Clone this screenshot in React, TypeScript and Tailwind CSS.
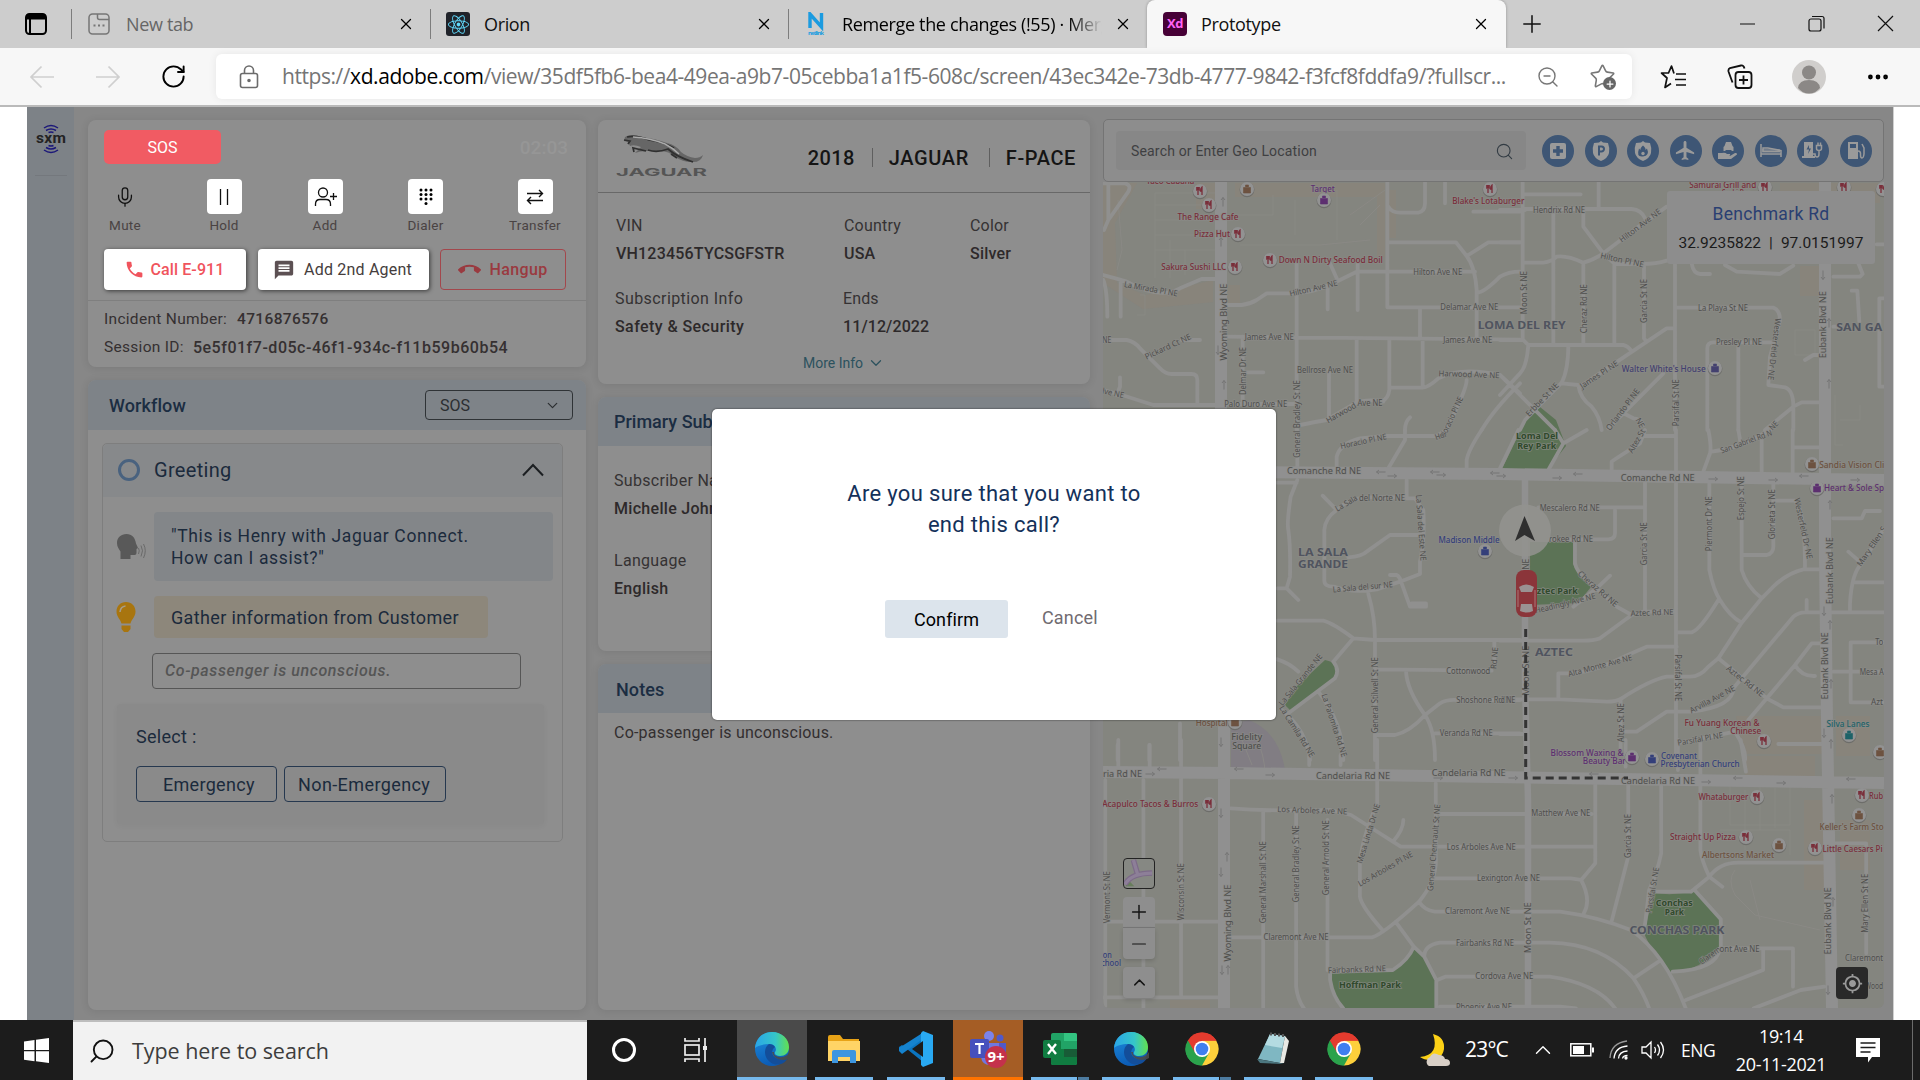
import React from "react";
import { RotateCw, X, Plus, Minus, Search, ChevronDown, ChevronUp, ZoomOut, Star, MoreHorizontal, Mic } from "lucide-react";
import { MdPhone, MdMessage, MdCallEnd, MdFlight, MdMyLocation } from "react-icons/md";
import { FaReact } from "react-icons/fa";

const ui = "font-['Roboto','Noto_Sans',sans-serif]";
const win = "font-['Open_Sans','Noto_Sans',sans-serif]";

/* ---------- browser chrome ---------- */

const CloseX = ({ className = "" }: { className?: string }) => (
  <X size={18} strokeWidth={1.7} className={`shrink-0 text-black ${className}`} />
);

function TabStrip() {
  return (
    <div className={`flex h-12 items-center bg-[#cdcdcd] text-[18px] tracking-[-0.35px] text-[#111] ${win}`}>
      <svg className="ml-[25px] shrink-0" width="22" height="22" viewBox="0 0 22 22">
        <rect x="1" y="1" width="20" height="20" rx="3.5" fill="none" stroke="#000" strokeWidth="2" />
        <path d="M1 4Q1 1 4 1H18Q21 1 21 4V6.500H1zM6 6V21H4V6z" fill="#000" />
      </svg>
      <i className="ml-6 h-[30px] w-px bg-[#7d7d7d]" />
      <div className="flex h-full w-[358px] items-center pl-4">
        <svg width="22" height="22" viewBox="0 0 22 22" fill="none" stroke="#767676" strokeWidth="1.5">
          <rect x="1" y="1" width="20" height="20" rx="3.500" />
          <path d="M9.500 1v3.500a2 2 0 0 0 2 2H21" />
          <path d="M5.500 12.500h2m2.500 0h2m2.500 0h2" strokeWidth="2.200" />
        </svg>
        <span className="ml-4 text-[#666]">New tab</span>
        <CloseX className="mr-[15px] ml-auto" />
      </div>
      <i className="h-[30px] w-px bg-[#7d7d7d]" />
      <div className="flex h-full w-[357px] items-center pl-[15px]">
        <span className="flex h-6 w-6 items-center justify-center rounded-[3px] bg-[#20232a]">
          <FaReact size={21} color="#61dafb" />
        </span>
        <span className="ml-[14px]">Orion</span>
        <CloseX className="mr-[15px] ml-auto" />
      </div>
      <i className="h-[30px] w-px bg-[#7d7d7d]" />
      <div className="flex h-full w-[358px] items-center pl-[18px]">
        <svg width="18" height="24" viewBox="0 0 18 24">
          <path d="M3 16V2L14.500 15V1" fill="none" stroke="#1b9be0" strokeWidth="3.400" />
          <text x="9" y="22.500" textAnchor="middle" fontSize="6" fontWeight="700" letterSpacing="0" fill="#1b9be0" textLength="16">netlink</text>
        </svg>
        <span className="ml-[17px] w-[260px] overflow-hidden bg-gradient-to-r from-black from-85% to-[#cdcdcd] bg-clip-text whitespace-nowrap text-transparent">
          Remerge the changes (!55) · Merge
        </span>
        <CloseX className="mr-[15px] ml-auto" />
      </div>
      <div className="flex h-full w-[359px] items-center rounded-t-lg bg-[#f7f7f7] pl-4 shadow-[0_0_3px_rgba(0,0,0,.3)]">
        <span className="flex h-6 w-6 items-center justify-center rounded bg-[#470137] text-[13px] font-bold text-[#ff61f6]">Xd</span>
        <span className="ml-[14px]">Prototype</span>
        <CloseX className="mr-[16px] ml-auto" />
      </div>
      <Plus size={28} strokeWidth={1.3} className="ml-[12px]" />
      <svg className="mr-[26px] ml-auto" width="154" height="18" viewBox="0 0 154 18" fill="none" stroke="#111" strokeWidth="1.2">
        <path d="M0 9H15M138 1L153 16M153 1L138 16" />
        <rect x="69" y="4" width="12" height="12" rx="2" />
        <path d="M72 1.500h10q2 0 2 2v10" />
      </svg>
    </div>
  );
}

function Toolbar() {
  return (
    <div className="relative z-10 flex h-[59px] items-center border-b-2 border-[#bababa] bg-[#f7f7f7]">
      <svg className="ml-[29px]" width="92" height="24" viewBox="0 0 92 24" fill="none" stroke="#cfcfcf" strokeWidth="1.700">
        <path d="M25 12H2M12.500 1.500L2 12l10.500 10.500M67 12H90M79.500 1.500L90 12 79.500 22.500" />
      </svg>
      <RotateCw size={27} strokeWidth={1.7} className="ml-[39px] text-black" />
      <div className="ml-[29px] flex h-[45px] w-[1416px] items-center rounded-md bg-white pl-[23px] shadow-[0_0_8px_rgba(0,0,0,.07)]">
        <svg width="20" height="24" viewBox="0 0 20 24" fill="none" stroke="#6b6b6b" strokeWidth="1.600">
          <rect x="1.500" y="8.500" width="17" height="14" rx="2" />
          <path d="M5.500 8V5.500a4.500 4.500 0 0 1 9 0V8" />
          <circle cx="10" cy="15.500" r="1" fill="#6b6b6b" />
        </svg>
        <span className={`ml-[23px] w-[1228px] text-[21px] tracking-[-0.44px] whitespace-nowrap text-[#757575] ${win}`}>
          https://<span className="text-black">xd.adobe.com</span>/view/35df5fb6-bea4-49ea-a9b7-05cebba1a1f5-608c/screen/43ec342e-73db-4777-9842-f3fcf8fddfa9/?fullscr...
        </span>
        <ZoomOut size={24} strokeWidth={1.4} className="ml-[26px] shrink-0 text-[#777]" />
        <span className="relative ml-[29px] shrink-0">
          <Star size={27} strokeWidth={1.4} className="text-[#777]" />
          <span className="absolute right-0 bottom-0 flex h-[13px] w-[13px] items-center justify-center rounded-full bg-[#666] text-white">
            <Plus size={10} strokeWidth={3} />
          </span>
        </span>
      </div>
      <svg className="ml-[28px]" width="28" height="26" viewBox="0 0 28 26" fill="none" stroke="#111" strokeWidth="1.700" strokeLinejoin="round">
        <path d="M14 9.500L11.500 2 8.500 9H1.500l5.500 5-2 9.500 6-4M16 10h10M15 15.500h11M16 21h10" />
      </svg>
      <svg className="ml-[39px]" width="26" height="26" viewBox="0 0 26 26" fill="none" stroke="#111" strokeWidth="1.800">
        <rect x="8.500" y="8" width="16" height="16" rx="3" />
        <path d="M16.500 11.500v9M12 16h9M5.500 18.500L1.500 7.500Q1 5 3 4l11-2.500q2.500-.500 3.500 3" />
      </svg>
      <svg className="ml-[39px]" width="34" height="34" viewBox="0 0 34 34">
        <circle cx="17" cy="17" r="17" fill="#d0cecc" />
        <circle cx="17" cy="12.500" r="7" fill="#8b8886" />
        <path d="M6 28q1-8 11-8t11 8q-4.500 5.500-11 5.500T6 28" fill="#8b8886" />
      </svg>
      <MoreHorizontal size={26} strokeWidth={2.4} className="ml-[39px] text-black" />
    </div>
  );
}

/* ---------- first column ---------- */

const tile = "flex h-[35px] w-[35px] items-center justify-center rounded bg-white text-[#111]";

function Action({ w, label, children, bare }: { w: string; label: string; children: React.ReactNode; bare?: boolean }) {
  return (
    <div className={`flex flex-col items-center ${w}`}>
      <div className={bare ? "flex h-[35px] items-center text-[#111]" : tile}>{children}</div>
      <span className="mt-px h-5 text-[13.500px] leading-5 tracking-[0.25px] text-[#4a4343]">{label}</span>
    </div>
  );
}

const card = "rounded-lg bg-[#8e8e8e] shadow-[0_1px_9px_rgba(0,0,0,.1)]";

function CallCard() {
  return (
    <section className={`h-[247px] ${card}`}>
      <div className="flex h-[44px] items-end justify-between pr-[18px] pl-4">
        <div className="flex h-[34px] w-[117px] items-center justify-center rounded-[5px] bg-[#f15b63] pt-px text-[16px] text-white">SOS</div>
        <span className="mb-[2px] text-[19px] font-medium text-[#969696]">02:03</span>
      </div>
      <div className="mt-[15px] flex">
        <Action w="w-[74px]" label="Mute" bare><Mic size={22} strokeWidth={1.4} /></Action>
        <Action w="w-[124px]" label="Hold">
          <svg width="12" height="16" viewBox="0 0 12 16"><path d="M2.500 0v16M9.500 0v16" stroke="#111" strokeWidth="1.300" /></svg>
        </Action>
        <Action w="w-[78px]" label="Add">
          <svg width="23" height="20" viewBox="0 0 23 20" fill="none" stroke="#111" strokeWidth="1.300">
            <circle cx="9" cy="5.500" r="4.500" />
            <path d="M1.500 19v-2q0-4.500 4.500-4.500h6q4.500 0 4.500 4.500v2M16 9.500h7M19.500 6v7" />
          </svg>
        </Action>
        <Action w="w-[123px]" label="Dialer">
          <svg width="14" height="18" viewBox="0 0 14 18">
            {[2, 7, 12].map((x) => [2, 6.500, 11].map((y) => <circle key={`${x}-${y}`} cx={x} cy={y} r="1.500" />))}
            <circle cx="7" cy="15.500" r="1.500" />
          </svg>
        </Action>
        <Action w="w-[96px]" label="Transfer">
          <svg width="18" height="16" viewBox="0 0 18 16" fill="none" stroke="#111" strokeWidth="1.400">
            <path d="M1 4.500h15.500M13 1l3.500 3.500L13 8M17 11.500H1.500M5 8l-3.500 3.500L5 15" />
          </svg>
        </Action>
      </div>
      <div className="mt-[14px] flex h-[41px] pl-4 text-[16px]">
        <button className="flex w-[142px] items-center justify-center gap-[6px] rounded bg-white pr-[2px] font-medium tracking-[0.1px] text-[#f0545d] shadow-[1px_1px_4px_rgba(0,0,0,.6)]">
          <MdPhone size={21} />Call E-911
        </button>
        <button className="ml-3 flex w-[171px] items-center justify-center gap-[9px] rounded bg-white pr-[2px] tracking-[0.2px] text-[#453d3d] shadow-[1px_1px_4px_rgba(0,0,0,.6)]">
          <MdMessage size={22} color="#5c5053" />Add 2nd Agent
        </button>
        <button className="ml-[11px] flex w-[126px] items-center justify-center gap-2 rounded border border-[#a3474c] font-medium tracking-[0.4px] text-[#9a3a40]">
          <MdCallEnd size={23} />Hangup
        </button>
      </div>
      <div className="mt-[10px] border-t border-[#7f7f7f] pt-[5px] pl-4 text-[15.500px] tracking-[0.3px] text-[#353031]">
        <div className="flex h-7 items-center">Incident Number:<b className="ml-[10px] font-medium tracking-[0.35px]">4716876576</b></div>
        <div className="flex h-7 items-center pb-px">Session ID:<b className="ml-[9px] text-[16px] font-medium tracking-[0.52px]">5e5f01f7-d05c-46f1-934c-f11b59b60b54</b></div>
      </div>
    </section>
  );
}

function WorkflowCard() {
  return (
    <section className={`mt-[13px] h-[630px] overflow-hidden ${card}`}>
      <header className="flex h-[50px] items-center justify-between bg-[#7e8388] pr-[13px] pl-[21px]">
        <h2 className="text-[18px] font-medium tracking-[0.1px] text-[#1b2d42]">Workflow</h2>
        <div className="flex h-[30px] w-[148px] items-center justify-between rounded border border-[#2f3336] pt-px pr-[11px] pl-[14px] text-[16px] text-[#2b2e31]">
          SOS<ChevronDown size={17} strokeWidth={1.7} />
        </div>
      </header>
      <div className="mt-[13px] ml-[14px] h-[399px] w-[461px] rounded-[5px] border border-[#7e7e7e] text-[18px] tracking-[0.3px] text-[#1b2a3c]">
        <div className="flex h-[53px] items-center rounded-t-[5px] bg-[#87898b] pr-[17px] pb-[2px] pl-[15px]">
          <i className="h-[22px] w-[22px] rounded-full border-3 border-[#49627f]" />
          <span className="ml-[14px] text-[20px]">Greeting</span>
          <svg className="ml-auto" width="24" height="14" viewBox="0 0 24 14"><path d="M2 12.500L12 2l10 10.500" fill="none" stroke="#1c1f22" strokeWidth="2" /></svg>
        </div>
        <div className="mt-[15px] flex items-center pl-[13px]">
          <svg width="30" height="26" viewBox="0 0 30 26">
            <path d="M10.500 0C5 0 1 3.500 1 9c0 4 2 6 3.500 8.500V25h10v-4h4q2 0 2-2v-4l1.500-1-2-4.500C19 3.500 16 0 10.500 0" fill="#595959" />
            <path d="M22.500 14q1.500 2.500 0 6M25 11.500q3 5 0 11M27.500 10q3.500 6.500 0 14" fill="none" stroke="#6a6a6a" strokeWidth="1" />
          </svg>
          <p className="ml-[8px] flex h-[69px] w-[399px] items-center rounded bg-[#838689] pl-[17px] text-[17.500px] leading-[22px] tracking-[0.62px]">
            "This is Henry with Jaguar Connect.<br />How can I assist?"
          </p>
        </div>
        <div className="mt-[15px] flex items-center pl-[13px]">
          <svg width="20" height="30" viewBox="0 0 20 30" fill="#a8750f">
            <path d="M10 0C4.500 0 .500 4 .500 9.500c0 5.500 4 7.500 5 12h9c1-4.500 5-6.500 5-12C19.500 4 15.500 0 10 0M5.500 23.500h9v3.500L12 30H8l-2.500-3z" />
            <path d="M4 10q.500-5.500 5.500-6" fill="none" stroke="#a79c87" strokeWidth="1.600" />
          </svg>
          <p className="ml-[18px] flex h-[42px] w-[334px] items-center rounded bg-[#8d877b] pl-[17px] tracking-[0.36px]">Gather information from Customer</p>
        </div>
        <div className="mt-[15px] ml-[49px] flex h-[36px] w-[369px] items-center rounded border border-[#565656] pl-3 text-[16px] font-medium tracking-[0.6px] text-[#555] italic">
          Co-passenger is unconscious.
        </div>
        <div className="mt-[15px] ml-[14px] h-[120px] w-[427px] rounded bg-[#8a8a8a] pt-[19px] pl-[19px] shadow-[0_2px_6px_rgba(0,0,0,.04)]">
          <div className="h-7 leading-7">Select :</div>
          <div className="mt-[15px] flex gap-[7px]">
            <span className="flex h-[36px] w-[141px] items-center rounded border border-[#26384f] pl-[26px]">Emergency</span>
            <span className="flex h-[36px] w-[162px] items-center rounded border border-[#26384f] pl-[13px] tracking-[0.4px]">Non-Emergency</span>
          </div>
        </div>
      </div>
    </section>
  );
}

/* ---------- second column ---------- */

function JaguarLogo() {
  return (
    <svg width="94" height="44" viewBox="0 0 94 44">
      <path d="M10 3Q16-1 27 3Q42 5 52 9Q61 11 66 18Q72 23 80 24Q85 24 88 21Q86 29 76 28Q68 28 60 23Q54 17 45 17L32 17Q25 17 20 19L26 13Q19 10 15 12L13 8L9 7z" fill="#666" />
      <path d="M12 3Q22 1 34 6Q48 8 59 14M33 16Q42 19 53 15Q62 23 78 28M9 6L15 7L13 10M31 17L18 14L19 18M56 20L62 24" fill="none" stroke="#303030" strokeWidth="1.700" />
      <path d="M18 3Q35 4 50 10Q58 14 64 20" fill="none" stroke="#aaa" strokeWidth="1.400" />
      <text x="1" y="41.500" textLength="91" lengthAdjust="spacingAndGlyphs" fontSize="10.500" fontWeight="700" fontFamily="Inter, sans-serif" fill="#555">JAGUAR</text>
    </svg>
  );
}

function Field({ label, value, w, cls = "" }: { label: string; value: string; w?: string; cls?: string }) {
  return (
    <div className={`flex flex-col text-[16px] leading-7 text-[#353233] ${w ?? ""} ${cls || "tracking-[0.2px]"}`}>
      <span>{label}</span>
      <span className="font-medium text-[#2d292a]">{value}</span>
    </div>
  );
}

function VehicleCard() {
  return (
    <section className={`h-[264px] ${card}`}>
      <div className="flex h-[73px] items-center border-b border-[#686868] pr-[14px] pl-[17px] text-[20px] font-medium text-[#151515]">
        <JaguarLogo />
        <div className="ml-auto flex items-center pt-[3px] whitespace-nowrap">
          <span className="tracking-[0.4px]">2018</span><i className="mr-4 ml-[17px] h-[19px] w-px bg-[#5f5f5f]" />
          <span className="tracking-[0.6px]">JAGUAR</span><i className="mr-4 ml-[20px] h-[19px] w-px bg-[#5f5f5f]" />
          <span className="tracking-[0.6px]">F-PACE</span>
        </div>
      </div>
      <div className="mt-[19px] flex pl-[18px]">
        <Field label="VIN" value="VH123456TYCSGFSTR" w="w-[228px]" />
        <Field label="Country" value="USA" w="w-[126px]" />
        <Field label="Color" value="Silver" />
      </div>
      <div className="mt-[17px] flex pl-[17px]">
        <Field label="Subscription Info" value="Safety & Security" w="w-[228px]" cls="tracking-[0.42px]" />
        <Field label="Ends" value="11/12/2022" cls="tracking-[0.1px]" />
      </div>
      <div className="mt-[10px] flex items-center justify-center text-[14px] leading-6 text-[#2c525e]">
        More Info<ChevronDown size={18} strokeWidth={1.7} className="ml-[4px]" />
      </div>
    </section>
  );
}

function SideCards() {
  return (
    <>
      <section className={`mt-[13px] h-[254px] overflow-hidden ${card}`}>
        <header className="flex h-[49px] items-center bg-[#7e8388] pl-4 text-[18px] font-medium text-[#1b2d42]">Primary Subscriber</header>
        <div className="mt-[21px] pl-4">
          <Field label="Subscriber Name" value="Michelle Johnson" cls="tracking-[0.3px]" />
          <Field label="Language" value="English" cls="mt-[24px] tracking-[0.3px]" />
        </div>
      </section>
      <section className={`mt-[13px] h-[346px] overflow-hidden ${card}`}>
        <header className="flex h-[49px] items-center bg-[#7e8388] pt-px pl-[18px] text-[18px] font-medium tracking-[0.1px] text-[#1b2d42]">Notes</header>
        <p className="mt-[8px] pl-4 text-[16px] leading-6 tracking-[0.22px] text-[#332f30]">Co-passenger is unconscious.</p>
      </section>
    </>
  );
}

/* ---------- map ---------- */

type Lbl = [string, number, number, number, number?, string?];

const RED = "#7a2e3a", PUR = "#5d2f70", BLU = "#343f7a", BRN = "#6d5240", TEAL = "#1d6268", GRY = "#4f4f4d", DIS = "#50545f", GRN = "#304a2c";

const labelsNW: Lbl[] = [
  ["Taco Cabana", 211, 243, 48, 0, RED], ["The Range Cafe", 324, 352, 61, 0, RED], ["Pizza Hut", 336, 401, 36, 0, RED],
  ["Sakura Sushi LLC", 281, 502, 65, 0, RED], ["Target", 668, 268, 24, 0, PUR], ["Down N Dirty Seafood Boil", 692, 481, 104, 0, RED],
  ["Blake's Lotaburger", 1165, 303, 72, 0, RED], ["La Mirada Pl NE", 153, 565, 54, 10], ["Hilton Ave NE", 640, 563, 49, -13],
  ["Hilton Ave NE", 1013, 514, 49], ["Delamar Ave NE", 1108, 620, 58], ["James Ave NE", 508, 710, 49], ["James Ave NE", 1103, 717, 49],
  ["Pickard Ct NE", 203, 738, 50, -25], ["Bellrose Ave NE", 675, 808, 56], ["Harwood Ave NE", 1107, 821, 61, 2], ["NE", 20, 719, 9],
  ["lve NE", 40, 877, 22, 12], ["Palo Duro Ave NE", 467, 911, 63], ["Harwood", 722, 937, 33, -30], ["Ave NE", 810, 906, 25],
  ["Delmar Dr NE", 426, 813, 48, -90], ["Bradley St NE", 590, 913, 48, -90], ["Wyoming Blvd NE", 369, 666, 77, -90, "W"], ["Horacio Pl NE", 1053, 950, 44, -65],
];
const labelsNE: Lbl[] = [
  ["Samurai Grill and", 668, 256, 67, 0, RED], ["Sushi Bar", 708, 278, 28, 0, RED], ["Hendrix Rd NE", 177, 328, 52], ["Hilton Ave NE", 419, 375, 50, -37], ["Hilton Pl NE", 367, 478, 44, 12],
  ["Moon St NE", 69, 578, 43, -90], ["Cheraz Rd NE", 250, 626, 49, -90], ["Garcia St NE", 431, 603, 44, -90], ["La Playa St NE", 669, 621, 50],
  ["Presley Pl NE", 717, 725, 46], ["Westerfeld Dr NE", 825, 748, 62, 97], ["Walter White's House", 491, 807, 84, 0, "#43406f"],
  ["James Pl NE", 296, 822, 44, -33], ["Erbbe St NE", 125, 897, 43, -46], ["Orlando Pl NE", 367, 927, 50, -53], ["Parsifal St NE", 525, 908, 47, -90],
  ["Eubank Blvd NE", 968, 674, 67, -90, "W"], ["LOMA DEL REY", 65, 676, 88, 0, DIS], ["SAN GA", 1078, 681, 46, 0, DIS], ["NE", 422, 968, 10, 60], ["NE", 820, 975, 9, -45],
];
const labelsMW: Lbl[] = [
  ["General", 590, 43, 27, -90], ["Horacio Pl NE", 790, 32, 47, -12], ["Hor", 1022, 15, 12, -20], ["Comanche Rd NE", 672, 121, 74, 0, "W"],
  ["La Sala", 738, 218, 24, -30], ["del Norte NE", 846, 201, 46], ["La Sala del Este NE", 965, 293, 66, 86], ["LA SALA", 669, 366, 50, 0, DIS], ["GRANDE", 669, 401, 50, 0, DIS],
  ["Madison Middle", 1107, 329, 61, 0, BLU], ["La Sala del sur NE", 788, 469, 60, -5], ["La Sala Grande NE", 600, 748, 64, -51], ["La Camila Rd NE", 593, 903, 59, 58],
  ["La Palomita Rd NE", 705, 885, 66, 72], ["General Stilwell St NE", 823, 796, 76, -90], ["Cottonwood", 1105, 722, 44], ["Rd NE", 1181, 684, 22, -85],
  ["Shoshone Rd NE", 1157, 808, 59], ["Veranda Rd NE", 1099, 908, 53], ["Hospital", 335, 878, 32, 0, BRN], ["Fidelity", 440, 920, 31, 0, "S"], ["Square", 440, 948, 29, 0, "S"],
];
const labelsME: Lbl[] = [
  ["Loma Del", 111, 19, 42, 0, GRN], ["Rey Park", 110, 48, 39, 0, GRN], ["Altez St", 408, 32, 26, -60], ["San Gabriel Rd N", 738, 33, 54, -20],
  ["Comanche Rd NE", 473, 143, 74, 0, "W"], ["Sandia Vision Cli", 1055, 104, 65, 0, BRN], ["Heart & Sole Sp", 1062, 174, 60, 0, PUR], ["Mescalero Rd NE", 209, 232, 60],
  ["rokee Rd NE", 213, 326, 44], ["Garcia St NE", 431, 341, 43, -90], ["Piermont Dr NE", 625, 281, 55, -90], ["Espejo St NE", 720, 205, 44, -90], ["Glorieta St NE", 815, 253, 50, -90],
  ["Westerfeld Dr NE", 912, 295, 62, 78], ["Eubank Blvd NE", 988, 422, 67, -90, "W"], ["Eubank Blvd NE", 973, 708, 67, -90, "W"], ["Mary Ellen S", 1113, 348, 46, -56],
  ["NE", 75, 403, 11, -90], ["ztec Park", 172, 483, 41, 0, GRN], ["Headingly Ave NE", 195, 518, 62, -14], ["Cheraz Rd NE", 295, 475, 50, 41], ["Aztec Rd NE", 456, 546, 43, -2],
  ["AZTEC", 162, 666, 38, 0, DIS], ["Moon St NE", 75, 722, 50, -90, "W"], ["Alta Monte Ave NE", 300, 705, 66, -15], ["Parsifal St NE", 534, 743, 47, 90], ["Aztec Rd NE", 737, 752, 45, 38],
  ["Arvilla Ave NE", 636, 806, 50, -28], ["Altez St NE", 360, 878, 39, -90], ["Fu Yuang Korean &", 666, 879, 75, 0, RED], ["Chinese", 737, 903, 31, 0, RED], ["Parsifal Pl NE", 600, 925, 46, -10],
  ["Silva Lanes", 1044, 881, 43, 0, TEAL], ["Blossom Waxing &", 261, 969, 73, 0, PUR], ["Beauty Bar", 313, 994, 43, 0, PUR], ["Covenant", 537, 978, 36, 0, BLU], ["Presbyterian Church", 600, 1002, 79, 0, BLU],
  ["rd NE", 20, 809, 17], ["To", 1138, 634, 8], ["Mesa A", 1115, 724, 24], ["Azt", 1131, 814, 12],
];
const labelsS: Lbl[] = [
  ["ria Rd NE", 43, 99, 39, 0, "W"], ["Candelaria Rd NE", 484, 105, 74, 0, "W"], ["Candelaria Rd NE", 705, 96, 74, 0, "W"], ["Candelaria Rd NE", 1067, 121, 74, 0, "W"],
  ["Acapulco Tacos & Burros", 96, 193, 96, 0, RED], ["Los Arboles Ave NE", 406, 209, 70, 2], ["Matthew Ave NE", 881, 216, 59], ["Los Arboles Ave NE", 729, 318, 69],
  ["Los Arboles Pl NE", 545, 385, 62, -30], ["Lexington Ave NE", 781, 412, 63], ["Claremont Ave NE", 722, 512, 65], ["Claremont Ave NE", 375, 588, 65], ["Fairbanks Rd NE", 736, 607, 58],
  ["Fairbanks Rd NE", 491, 686, 58, -2], ["Cordova Ave NE", 773, 705, 58], ["Phoenix Ave NE", 734, 800, 56], ["Hoffman Park", 516, 736, 62, 0, GRN], ["Conchas", 1098, 489, 37, 0, GRN], ["Park", 1098, 517, 19, 0, GRN],
  ["CONCHAS PARK", 1103, 571, 95, 0, DIS], ["Whataburger", 1192, 172, 50, 0, RED], ["Rub", 1484, 167, 14, 0, RED], ["Keller's Farm Sto", 1437, 260, 64, 0, BRN], ["Straight Up Pizza", 1153, 291, 66, 0, RED],
  ["Albertsons Market", 1220, 346, 72, 0, BRN], ["Little Caesars Pi", 1439, 326, 60, 0, RED], ["Wisconsin St NE", 154, 455, 57, -90], ["Vermont St NE", 12, 472, 52, -90],
  ["Wyoming Blvd NE", 243, 549, 77, -90, "W"], ["General Marshall St NE", 310, 427, 82, -90], ["General Bradley St NE", 373, 371, 77, -90], ["General Arnold St NE", 432, 353, 75, -90],
  ["Mesa Linda Dr NE", 512, 280, 62, -73], ["General Chennault St NE", 637, 323, 87, -85], ["Moon St NE", 817, 563, 51, -90, "W"], ["Garcia St NE", 1008, 288, 44, -90], ["Parsifal St NE", 1055, 450, 46, -80],
  ["Eubank Blvd NE", 1390, 543, 67, -90, "W"], ["Mary Ellen St NE", 1461, 490, 59, -90], ["Clarem", 1165, 645, 24, -35], ["ont Ave NE", 1223, 625, 40], ["Claremont", 1461, 651, 38], ["Wood", 1480, 736, 18], ["on", 14, 644, 9, 0, BLU], ["chool", 21, 668, 20, 0, BLU],
];

function Labels({ list, ox, oy, sx }: { list: Lbl[]; ox: number; oy: number; sx: number }) {
  return (
    <g>
      {list.map(([t, x, y, len, rot = 0, kind = GRY], i) => {
        const district = kind === DIS, wide = kind === "W", park = kind === GRN;
        const fill = kind === "W" || kind === "S" ? GRY : kind;
        const poi = !wide && kind !== GRY;
        return (
          <text
            key={i}
            transform={`translate(${(ox + x * sx).toFixed(1)} ${(oy + y / 3).toFixed(1)}) rotate(${rot})`}
            textAnchor="middle" dominantBaseline="central" textLength={len} lengthAdjust="spacingAndGlyphs"
            fontSize={district ? 10.5 : wide ? 9.5 : poi ? 8.7 : 8.2}
            fontWeight={district || park ? 700 : poi ? 500 : 400}
            fill={fill} stroke="#8b8b88" strokeWidth="1.6" strokeOpacity=".75" paintOrder="stroke"
          >
            {t}
          </text>
        );
      })}
    </g>
  );
}

const roadsNW = "M10 250H75q20 5 10 25L25 360 12 390M25 250V360M10 525Q50 535 80 545 180 600 240 565L305 537H345M10 540Q22 570 22 650M62 545V650M10 720H80Q105 725 120 745L180 805Q195 822 215 822H275Q292 822 292 840V910M60 832V860L50 885M10 870L75 888 160 915H345M245 720H300M380 615H425Q450 612 470 600L500 580H570Q640 580 700 550L770 515H1125M590 490V990M690 490L710 535M683 560V628M773 490V630M862 245V622H1260M865 320Q875 338 900 338H955Q975 335 975 310V245M1035 245V310M1120 335H1260M380 710L1260 719M428 710V910M440 817H490M868 427H1068L1100 468Q1125 500 1130 570V715M1100 468L1165 427H1260M1130 578Q1150 580 1200 530 1225 515 1260 515M960 622V715M770 720V905M687 810V960M868 720V870Q865 895 845 905M968 720V862M872 863H968Q985 862 1015 835 1080 800 1200 825L1260 880M600 975Q650 965 680 960L765 910Q800 895 850 905M1260 850Q1180 930 1145 990M1100 840Q1100 870 1040 985M915 990Q915 965 930 952M380 912H590";
const roadsNE = "M68 245V720M75 283H242M0 330H75M75 327H395Q425 330 435 355M296 245V325M160 330V730M250 330V380Q280 420 310 460L395 395 500 320M75 488H130Q155 485 170 470 200 465 250 488 280 480 310 460L345 492H425Q470 492 500 482M250 490V730M343 495V730M432 492V715L440 725M525 490V990M0 720H70L85 735H370Q385 738 395 755M240 860L500 685H525M85 735Q80 800 60 820L0 885M0 825L165 990M205 735Q205 810 185 848L75 960 60 990M185 850L235 855Q240 895 275 920 300 950 305 990M530 623H820Q840 630 840 660 830 700 810 770L805 855 855 862Q880 870 880 920V990M622 990V745Q622 727 640 727H820M715 740V990M795 990L880 920 905 907H960M325 985L490 820M370 940L400 955Q420 955 430 975M575 490Q580 520 600 522H630M675 495L710 515 840 522 880 497M1000 530H1080L1088 522 1075 490M1130 433H1150M1055 572H1072L1078 665M1000 680H1020M1150 595H1138V860H1150M915 780L940 765H960M0 427H65";
const roadsMW = "M592 0V110M592 150L572 200Q560 280 565 300 572 350 570 440L560 475H532M560 475L595 510M532 158H590M668 197L710 240Q675 265 673 300V450Q672 470 700 470 760 490 830 478L900 455 960 432V395Q975 330 970 240L945 205H920V150M710 240Q745 205 800 202H920M745 382Q785 380 800 365L870 315H965M870 435H890Q900 440 905 460L930 530H978V520H935M805 492Q825 560 825 630V990M532 572H670Q700 580 760 625L825 630H1260M760 625L700 695Q720 720 705 745L565 850M532 688Q570 700 595 725M655 785Q730 880 730 990M545 840Q620 900 630 990M830 718L1175 722M918 722Q920 780 975 855 1005 900 1005 990M830 915H885Q930 905 975 855L1020 820Q1040 808 1070 810H1260M1005 910H1260M1183 635V700M710 110V80Q720 40 780 25L860 18H1010L1040 0M915 0V30L865 115M1145 0Q1105 60 1100 90V115M1255 0L1200 115M240 880V990M53 945V990M148 945V990";
const roadsME = "M115 232H430M345 240V310Q345 328 325 328H150M435 155V545M528 0V990M435 18H525M435 0L420 40Q340 90 335 95V120M190 40L145 120M165 0L190 40 260 0M625 0Q635 50 630 70L610 125M635 65Q720 55 810 0M715 0L722 40M785 20V130M878 0V130M880 52H965M628 155V420Q640 480 660 510 690 560 725 578M725 155V420Q740 470 785 505M725 375H800Q820 370 820 350V155M825 212H885Q915 240 915 415M965 418H910Q860 430 820 470L785 505 725 578 655 685 625 710Q600 740 570 740H500Q450 750 365 805 350 815 320 815L180 808H0M225 335V400Q230 425 260 450L350 530 395 555 300 625Q280 632 250 632H0M220 530L290 475 330 437M395 555L430 545H520M530 607H575Q600 600 655 510M530 650H440Q370 680 330 700 260 730 205 730H175V805M362 810V960M375 905H410L500 845H575Q700 830 700 775L880 560Q895 547 915 547H1150M920 547V510M655 685L800 805 850 832H965M965 640H935L885 705 745 870M885 705Q905 740 945 738M1000 265H1085L1095 243H1140M1000 725H1150M1150 637H1052V817H1150M1050 547V520Q1055 430 1085 400L1150 300M1045 365L1085 400M1065 457H1150M835 942H965M530 940L705 905Q740 960 735 990M0 912H75";
const roadsS = "M10 120V805M35 0V80M95 15V80M155 0V770M83 120V805M5 545H230M5 772H230M250 205Q340 215 440 210L480 225 560 305 575 320H945M560 305Q580 270 580 240M400 50V75M460 45V75M530 0V190Q500 300 497 370V470Q500 500 540 570M312 215V805M375 215V740Q378 780 390 805M435 240V690M250 592H520Q540 585 610 485 645 420 642 350V130M610 485Q620 510 640 515H880Q950 530 1015 570 1080 640 1120 805M565 545L600 620M650 222H940M947 135V370L920 420Q940 480 925 520M640 415H900L920 420M1010 135V350L978 545M1073 135V340Q1065 400 1050 450M1148 0V330Q1150 360 1165 410L1190 440M1130 455L1165 410Q1185 368 1220 368H1390M1130 455H1060M1050 450L1040 580M600 620L620 650Q620 615 650 608H860Q960 610 1020 715 1040 760 1050 805M620 650L643 720V805M1020 715L1068 665M645 720L660 710H860Q950 730 985 805M1138 452L1187 538V620M1095 695Q1180 690 1185 625H1325V740M1385 740L1340 750 1250 805M1268 630V690L1120 780M1465 310V640M1400 310H1465M1005 0V80M1105 0V90M1225 0L1235 95M650 800H880L910 805M440 695V720Q445 770 465 805M440 695L560 690Q590 660 600 620";

const forks: [number, number][] = [
  [1200, 191], [1209, 205], [1238, 234], [1235, 267], [1270, 260], [1490, 189], [1765, 187], [1844, 187], [1883, 189],
  [1764, 741], [1209, 804], [1757, 797], [1862, 795], [1746, 837], [1815, 848],
];
const pois: [number, number, string][] = [
  [1247, 189, BRN], [1324, 200, PUR], [1715, 368, "#43406f"], [1485, 551, BLU], [1812, 464, BRN], [1817, 488, PUR],
  [1849, 735, TEAL], [1880, 752, BRN], [1632, 757, PUR], [1652, 759, BLU], [1859, 815, BRN], [1779, 845, BRN], [1235, 722, BRN],
];
const arrows: [number, number, number][] = [
  [1223, 202, 0], [1221, 242, 0], [1224, 385, 0], [1218, 350, 180], [1823, 275, 180], [1829, 323, 0], [1829, 384, 0], [1381, 472, -90], [1392, 476, 90], [1435, 472, -90], [1441, 475, 90], [1495, 473, -90], [1501, 476, 90],
  [1557, 478, 90], [1578, 474, -90], [1713, 479, 90], [1773, 480, 90], [1804, 476, -90], [1855, 480, 90], [1830, 505, 0], [1824, 611, 180], [1830, 625, 0], [1831, 684, 0], [1824, 733, 180], [1831, 744, 0],
  [1221, 742, 180], [1150, 774, 90], [1162, 769, -90], [1239, 769, -90], [1270, 775, 90], [1438, 778, 90], [1513, 778, 90], [1594, 774, -90], [1706, 782, 90], [1738, 778, -90], [1781, 783, 90], [1851, 779, -90],
  [1221, 813, 180], [1227, 857, 0], [1221, 872, 180], [1222, 970, 180], [1228, 970, 0], [1832, 799, 0], [1828, 990, 180], [1833, 902, 0],
];

function MapCanvas() {
  const third = "scale(.33333)";
  return (
    <svg className="block" width="781" height="826" viewBox="1103 182 781 826" fontFamily="'Noto Sans', sans-serif">
      <rect x="1103" y="182" width="781" height="826" fill="#84857f" />
      <g fill="#8a8379" opacity=".7">
        <path d="M1103 183h34l-22 40 2 60 28 12 48-10 20-5v22l-70 7-40-26zM1196 183h20v26h-20zM1235 183h150v74h-8v-60h-142zM1226 285h14v18h-14zM1386 190h10v48h-10zM1780 183h100v20h-100zM1800 266h24v30h-24zM1736 716h88v38h-80zM1836 716h34v40h-34zM1745 756h70v22h-70zM1804 800h30v90h-30zM1840 820h30v50h-30zM1170 1000h40v8h-40z" />
      </g>
      <path d="M1231 778v-54l18-4q30 12 36 50z" fill="#817d83" />
      <g fill="none" stroke="#8b8a86" strokeWidth=".8">
        <path d="M1155 193h60M1155 205h60M1155 220h55M1155 235h60M1155 250h60M1155 193v85M1170 240v38M1185 250v25M1235 215h38v-20M1240 245h80l50-5M1295 200v35M1337 190v50M1350 215l35-25M1360 225l20-20M1118 200l4 50-5 20M1140 295h5v20h-8M1795 330v25h20v-25zM1840 420h20v-15M1730 785v40h60v-45M1745 790v60M1760 785v45M1775 788v40M1720 830h70v25M1735 870q-8 10 0 25l20 20 65 15M1750 880l10 40M1843 445h-8v-50M1255 735q10 20 10 40M1242 740l10 25" />
      </g>
      <g fill="#5c7356">
        <path d="M1540 407l16 13 10 26-18 23h-46l15-31 8-20z" />
        <path d="M1325 660q12 2 11 13-2 5-9 10l-36 28-6-6 11-18z" />
        <path d="M1530 542h43v22q4 10 18 23l-13 16-48 2z" />
        <path d="M1414 947q-5 13-21 23l-63 2v8q3 17 13 28h94v-28l-13-23z" />
        <path d="M1654 893q21 3 41-2l14 17 12 11-2 28q-17 24-49 25-21-25-26-39z" />
      </g>
      <g fill="none" stroke="#90908f" strokeWidth="3.800" strokeLinecap="round" strokeLinejoin="round">
        <g transform="translate(1100 100)"><path transform={third} strokeWidth="11.500" d={roadsNW} /></g>
        <g transform="translate(1500 100)"><path transform={third} strokeWidth="11.500" d={roadsNE} /></g>
        <g transform="translate(1100 430)"><path transform={third} strokeWidth="11.500" d={roadsMW} /></g>
        <g transform="translate(1500 430)"><path transform={third} strokeWidth="11.500" d={roadsME} /></g>
        <path transform="translate(1100 740) scale(.523 .33333)" vectorEffect="non-scaling-stroke" d={roadsS} />
      </g>
      <g fill="none" stroke="#909090" strokeWidth="12">
        <path d="M1221 182V560L1224 720V1008M1825 182V560L1827 720 1832 1008M1103 772L1230 773 1884 783M1103 471L1500 474 1884 480" />
        <path d="M1525 475V680L1528 800V1008" strokeWidth="6.500" />
      </g>
      <g fill="none" stroke="#737373" strokeWidth=".9">
        {arrows.map(([x, y, r], i) => <path key={i} transform={`translate(${x} ${y}) rotate(${r})`} d="M0 4.500V-4.500M-2-2L0-4.500 2-2" />)}
      </g>
      <Labels list={labelsNW} ox={1100} oy={100} sx={1 / 3} />
      <Labels list={labelsNE} ox={1500} oy={100} sx={1 / 3} />
      <Labels list={labelsMW} ox={1100} oy={430} sx={1 / 3} />
      <Labels list={labelsME} ox={1500} oy={430} sx={1 / 3} />
      <Labels list={labelsS} ox={1100} oy={740} sx={0.523} />
      {forks.map(([x, y], i) => (
        <g key={i} transform={`translate(${x} ${y})`}>
          <circle cy=".8" r="7.400" fill="#6d6d6a" /><circle r="7" fill="#929292" />
          <path d="M-2 0V4M-3.200-4V-1h2.400V-4M-2-4v3M2 4V-4q-1.500 1-1.500 4H2" fill="none" stroke={RED} strokeWidth="1.300" />
        </g>
      ))}
      {pois.map(([x, y, c], i) => (
        <g key={i} transform={`translate(${x} ${y})`}>
          <circle cy=".8" r="7.400" fill="#6d6d6a" /><circle r="7" fill="#929292" />
          <path d="M-3.500-1.500h7V4h-7zM-1.500-2V-4h3v2" fill={c} stroke={c} strokeWidth=".6" />
        </g>
      ))}
      <path d="M1525.700 629V778H1628" fill="none" stroke="#343434" strokeWidth="3" strokeDasharray="8 5" />
      <circle cx="1525" cy="530.500" r="26" fill="#93938f" opacity=".85" />
      <path d="M1524.500 516l10.500 25-10.500-6-9.500 6z" fill="#2f2f2f" />
      <g>
        <rect x="1516" y="570" width="21" height="47" rx="8" fill="#8b353a" />
        <path d="M1519 587q7.500-5 15 0l-2 5h-11zM1521 604h11l1 7q-6.500 3-13 0z" fill="#9a9292" />
        <path d="M1518 590v17M1535 590v17" stroke="#a77" strokeWidth="1" />
      </g>
    </svg>
  );
}

const white = "#9a9a9a";
const poiIcons: React.ReactNode[] = [
  <svg key="a" width="18" height="18" viewBox="0 0 18 18"><rect x="1" y="1" width="16" height="16" rx="2" fill={white} /><path d="M9 4v10M4 9h10" stroke="#3e5675" strokeWidth="3.400" /></svg>,
  <svg key="b" width="18" height="20" viewBox="0 0 18 20"><path d="M9 0l2 1.500L16 2q2 5 1 10t-8 8q-7-3-8-8T2 2l5-.5z" fill={white} /><path d="M7 14.500V5.500h2.500a2.500 2.500 0 0 1 0 5H7" fill="none" stroke="#3e5675" strokeWidth="2" /></svg>,
  <svg key="c" width="18" height="20" viewBox="0 0 18 20"><path d="M9 0l2 1.500L16 2q2 5 1 10t-8 8q-7-3-8-8T2 2l5-.5z" fill={white} /><path d="M9 4.500q3 2.500 2.500 4.500L13 7.500q3 7-4 8t-4-8L6.500 9Q6 7 9 4.500" fill="#3e5675" /><circle cx="9" cy="12.500" r="1.700" fill={white} /></svg>,
  <MdFlight key="d" size={23} color={white} />,
  <svg key="e" width="20" height="18" viewBox="0 0 20 18" fill={white}><path d="M6.500 4L8 0h5l1.500 4 1 1v4h-2V8h-6v1h-2V5zM0 11h4q3-1 5 1h3q1 1.500-1 2H8h4l5-3q2.500-.5 2 1.500L13 17H0z" /></svg>,
  <svg key="f" width="22" height="13" viewBox="0 0 22 13" fill="none" stroke={white} strokeWidth="1.500"><path d="M1 0v13M1 10h20M21 13V6.500L8 4H3v3.500h17" /><path d="M2 5h18v3.500H2z" fill={white} stroke="none" opacity=".55" /></svg>,
  <svg key="g" width="22" height="19" viewBox="0 0 22 19"><path d="M2 1h9v14h2v2H0v-2h2z" fill={white} /><path d="M7 4L4.500 8.500H7L6 13l3-5.500H7z" fill="#3e5675" /><path d="M11 13h2q0 3 2 3t2-3V9M14.500 4.500v3q0 2 2.500 2t2.500-2v-3zM16 1.500v3M18.500 1.500v3" fill="none" stroke={white} strokeWidth="1.500" /></svg>,
  <svg key="h" width="18" height="19" viewBox="0 0 18 19"><path d="M1 1h10v17H1z" fill={white} /><path d="M3 3h6v4H3z" fill="#3e5675" /><path d="M11 10q3 0 2.500 4 0 3 1.500 3t2-4V7l-2-4" fill="none" stroke={white} strokeWidth="1.500" /></svg>,
];

function MapPanel() {
  return (
    <section className="-mt-px ml-[13px] w-[781px]">
      <div className="flex h-[63px] items-center rounded-[5px] border border-[#747474] bg-[#8d8d8d] pl-3">
        <div className="flex h-[39px] w-[410px] items-center justify-between rounded bg-[#878787] pt-px pr-[12px] pl-[15px] text-[14px] tracking-[0.17px] text-[#3f4042]">
          Search or Enter Geo Location<Search size={19} strokeWidth={1.4} className="text-[#333c44]" />
        </div>
        <div className="ml-[16px] flex gap-[10.500px]">
          {poiIcons.map((icon, i) => <span key={i} className="flex h-8 w-8 items-center justify-center rounded-full bg-[#3e5675]">{icon}</span>)}
        </div>
      </div>
      <div className="relative overflow-hidden rounded-b-md">
        <MapCanvas />
        <div className="absolute top-[9px] right-[9px] flex h-[73px] w-[208px] flex-col items-center rounded-[3px] bg-[#8d8d8d] pt-[9px] text-[#1b1b1b]">
          <span className="text-[17.500px] leading-7 tracking-[0.3px] text-[#2a3f72]">Benchmark Rd</span>
          <span className="flex gap-2 text-[15.500px] leading-[30px]"><span>32.9235822</span><span>|</span><span>97.0151997</span></span>
        </div>
        <div className="absolute top-[676px] left-5 flex w-8 flex-col">
          <svg className="rounded-[4px] border border-[#222] bg-[#868883]" width="32" height="31" viewBox="0 0 32 31">
            <path d="M2 20l9 9H2z" fill="#687e5c" /><path d="M1 27Q8 15 30 15M10 1l5 17" stroke="#7c6a88" strokeWidth="6" fill="none" /><path d="M1 27Q8 15 30 15M10 1l5 17" stroke="#8d7f98" strokeWidth="3.500" fill="none" />
          </svg>
          <span className="mt-2 flex h-[31px] items-center justify-center rounded-t-[4px] border-b border-[#777] bg-[#8e8e8e] text-[#151515]"><Plus size={22} strokeWidth={1.6} /></span>
          <span className="flex h-[31px] items-center justify-center rounded-b-[4px] bg-[#8e8e8e] text-[#151515] shadow-[0_2px_4px_rgba(0,0,0,.15)]"><Minus size={22} strokeWidth={1.3} /></span>
          <span className="mt-2 flex h-[31px] items-center justify-center rounded-[4px] bg-[#8e8e8e] text-[#151515] shadow-[0_2px_4px_rgba(0,0,0,.15)]"><ChevronUp size={19} strokeWidth={1.8} /></span>
        </div>
        <span className="absolute top-[785px] right-4 flex h-8 w-8 items-center justify-center rounded-[4px] bg-[#292929]"><MdMyLocation size={21} color="#999" /></span>
      </div>
    </section>
  );
}

/* ---------- dialog ---------- */

function ConfirmDialog() {
  return (
    <div className="absolute top-[302px] left-[712px] flex h-[311px] w-[564px] flex-col items-center rounded-[5px] bg-white shadow-[0_0_2px_rgba(0,0,0,.7)]">
      <p className="mt-[69px] text-center text-[22px] leading-[31px] tracking-[0.32px] text-[#14315a]">Are you sure that you want to<br />end this call?</p>
      <div className="mt-[60px] flex w-full items-start pl-[173px]">
        <button className="flex h-[38px] w-[123px] items-center justify-center rounded-[3px] bg-[#dce4ec] text-[18px] tracking-[0.1px] text-black">Confirm</button>
        <button className="ml-[34px] h-[35px] text-[18px] tracking-[0.15px] text-[#716b70]">Cancel</button>
      </div>
    </div>
  );
}

/* ---------- taskbar ---------- */

const EdgeIcon = () => (
  <svg width="36" height="36" viewBox="0 0 36 36">
    <defs>
      <linearGradient id="edgeTop" x1="0" x2="1"><stop offset="0" stopColor="#2aa5e8" /><stop offset=".6" stopColor="#35c6c9" /><stop offset="1" stopColor="#63e04d" /></linearGradient>
      <linearGradient id="edgeLow" x1="0" y1="0" x2=".3" y2="1"><stop offset="0" stopColor="#1e8fe0" /><stop offset="1" stopColor="#0c5cb5" /></linearGradient>
    </defs>
    <circle cx="18" cy="18" r="17" fill="url(#edgeLow)" />
    <path d="M1 17C2 7 9 1 18 1c10 0 17 7 17 15 0 6-4 9-9 9-4 0-6-2-5-4 2-2 1-8-6-8-6 0-12 2-14 4" fill="url(#edgeTop)" />
    <path d="M15 13c-4 3-5 8-3 13 3 6 9 9 15 7q4-1 7-6-5 3-10 1-6-2-6-7 0-3 3-5-2-3-6-3" fill="#134e9a" />
    <path d="M20 21q-1 4 5 5 7 1 11-5v6l-2 1q-5 2-10 0-5-2-6-7z" fill="#4a4a4a" opacity=".9" />
  </svg>
);
const ChromeIcon = () => (
  <svg width="34" height="34" viewBox="0 0 34 34">
    <path d="M17 17L2.700 8.700A16.500 16.500 0 0 1 31.300 8.700z" fill="#e33b2e" /><path d="M2.700 8.700L17 17l0 16.500A16.500 16.500 0 0 1 2.700 8.700" fill="#2ba24c" />
    <path d="M31.300 8.700H17v8.300L17 33.500A16.500 16.500 0 0 0 31.300 8.700" fill="#fdd03b" /><path d="M3 9l7 12 1-8 6-4.500h14.500Q26 .500 17 .500 8 .500 3 9" fill="#e33b2e" />
    <path d="M17 33.500L24 21l-7 4-7-4L3 9q-5 9 0 17 5 7.500 14 7.500" fill="#2ba24c" />
    <circle cx="17" cy="17" r="8" fill="#fff" /><circle cx="17" cy="17" r="6.300" fill="#3f7ff0" />
  </svg>
);
const FolderIcon = () => (
  <svg width="34" height="30" viewBox="0 0 34 30">
    <path d="M1 3q0-2 2-2h10l3 4h16v22H1z" fill="#e8a317" /><path d="M1 7h32v20H1z" fill="#ffd466" /><path d="M5 29V18q0-2 2-2h20q2 0 2 2v11h-6v-6H11v6z" fill="#3d96e0" />
  </svg>
);
const CodeIcon = () => (
  <svg width="36" height="36" viewBox="0 0 36 36">
    <path d="M25 1L4 21l-3-2v-3l3-2 21 17V1" fill="#0b75c0" /><path d="M1 20l3 3L26 7V1L1 17z" fill="#1583cf" /><path d="M25 0l10 4v28l-10 4-2-2V2z" fill="#29a9f2" /><path d="M25 10L14 18l11 8z" fill="#1c1c1c" />
  </svg>
);
const TeamsIcon = () => (
  <svg width="38" height="38" viewBox="0 0 38 38">
    <circle cx="20" cy="6" r="5" fill="#7b83eb" /><circle cx="31" cy="8" r="3.500" fill="#5059c9" /><path d="M12 13h18v14q-1 8-9 8t-9-8z" fill="#6f77e0" /><path d="M30 13h7v10q0 5-7 6z" fill="#5059c9" />
    <rect x="1" y="9" width="19" height="19" rx="2" fill="#4650bd" /><path d="M6 14h9M10.500 14v10" stroke="#fff" strokeWidth="2.200" />
    <circle cx="27" cy="27" r="11" fill="#c4314b" /><text x="27" y="32" textAnchor="middle" fontSize="15" fontWeight="700" fill="#fff" fontFamily="Open Sans, sans-serif">9+</text>
  </svg>
);
const ExcelIcon = () => (
  <svg width="36" height="34" viewBox="0 0 36 34">
    <rect x="9" y="1" width="26" height="32" rx="2" fill="#21a366" /><path d="M22 1h11q2 0 2 2v6H22z" fill="#33c481" /><path d="M9 17h26v14q0 2-2 2H11q-2 0-2-2z" fill="#107c41" /><path d="M22 17h13v8H22z" fill="#185c37" />
    <rect x="1" y="8" width="18" height="18" rx="2" fill="#107c41" /><path d="M6 12l8 10M14 12L6 22" stroke="#fff" strokeWidth="2.400" />
  </svg>
);
const NotepadIcon = () => (
  <svg width="34" height="34" viewBox="0 0 34 34">
    <path d="M14 2l15 2-5 27-22-4z" fill="#7fb7c2" /><path d="M14 2l15 2-3 12-17-3z" fill="#b4dbe1" /><path d="M29 4l4 5-5 22-4 0z" fill="#e9e9e4" /><path d="M1 27l23 4 4 1-24-1z" fill="#4c7780" /><path d="M14 2l2 0M18 2.500l2 0M22 3l2 0M26 3.500l2 0" stroke="#555" strokeWidth="3" />
  </svg>
);

const apps: { w: string; bg?: string; ml: string; bar: string; icon: React.ReactNode; extra?: boolean }[] = [
  { w: "w-[70px]", bg: "bg-[#4a4a4a]", ml: "ml-[30px]", bar: "bg-[#76b9ed]", icon: <EdgeIcon /> },
  { w: "w-[58px]", ml: "ml-[8px]", bar: "bg-[#76b9ed]", icon: <FolderIcon /> },
  { w: "w-[58px]", ml: "ml-[14px]", bar: "bg-[#76b9ed]", icon: <CodeIcon /> },
  { w: "w-[70px]", bg: "bg-[#a55d25]", ml: "ml-[8px]", bar: "bg-[#ff7300]", icon: <TeamsIcon /> },
  { w: "w-[58px]", ml: "ml-[8px]", bar: "bg-[#76b9ed]", icon: <ExcelIcon />, extra: true },
  { w: "w-[58px]", ml: "ml-[13px]", bar: "bg-[#76b9ed]", icon: <EdgeIcon /> },
  { w: "w-[58px]", ml: "ml-[13px]", bar: "bg-[#76b9ed]", icon: <ChromeIcon />, extra: true },
  { w: "w-[58px]", ml: "ml-[13px]", bar: "bg-[#76b9ed]", icon: <NotepadIcon /> },
  { w: "w-[58px]", ml: "ml-[13px]", bar: "bg-[#76b9ed]", icon: <ChromeIcon /> },
];

function Taskbar() {
  return (
    <footer className={`flex h-[60px] items-center bg-[#1c1c1c] text-white ${win}`}>
      <svg className="ml-6 shrink-0" width="25" height="25" viewBox="0 0 25 25" fill="#fff"><path d="M0 3.500l10.500-1.500v10H0zM12 1.800L25 0v12H12zM0 13.200h10.500v10L0 21.800zM12 13.200h13V25l-13-1.800z" /></svg>
      <div className="ml-6 flex h-full w-[514px] items-center border-t-2 border-[#bdbdbd] bg-[#f2f2f2] pl-[15px] text-[21.500px] tracking-[-0.05px] text-[#3d3d3d]">
        <Search size={28} strokeWidth={1.6} className="-scale-x-100 text-[#111]" />
        <span className="ml-[16px] whitespace-nowrap">Type here to search</span>
      </div>
      <i className="ml-[25px] h-6 w-6 shrink-0 rounded-full border-3 border-white" />
      <svg className="ml-[47px] shrink-0" width="26" height="26" viewBox="0 0 26 26" fill="none" stroke="#eee" strokeWidth="1.700">
        <rect x="2" y="8" width="14" height="10" /><path d="M2 1v3h14V1M2 25v-3h14v3M22 1v24" /><path d="M20 9h4v4h-4z" fill="#eee" stroke="none" />
      </svg>
      <div className="-ml-[2px] flex h-full">
        {apps.map((a, i) => (
          <div key={i} className={`flex h-full flex-col ${a.w} ${a.ml} ${a.bg ?? ""}`}>
            <div className="flex flex-1 items-center justify-center">{a.icon}</div>
            <div className="flex h-[3px] gap-px"><i className={`flex-1 ${a.bar}`} />{a.extra && <i className="w-[11px] bg-[#4d7ba0]" />}</div>
          </div>
        ))}
      </div>
      <svg className="ml-[44px] shrink-0" width="36" height="34" viewBox="0 0 36 34">
        <path d="M16 1q12 3 11 15-2 11-14 11-6 0-10-3 20-2 13-23" fill="#fcd116" /><path d="M12 33a5 5 0 0 1 1-9q3-6 9-2 5 0 6 4 5 0 5 4 0 3-4 3z" fill="#d8cfc6" />
      </svg>
      <span className="ml-[12px] text-[21px] tracking-[-0.8px]">23°C</span>
      <ChevronUp size={26} strokeWidth={1.3} className="ml-[22px] shrink-0" />
      <svg className="ml-[14px] shrink-0" width="24" height="14" viewBox="0 0 24 14"><rect x=".8" y=".8" width="20" height="12" fill="none" stroke="#fff" strokeWidth="1.500" /><path d="M3 3h11v8H3zM22 4.500h2v5h-2z" fill="#fff" /></svg>
      <svg className="ml-[15px] shrink-0" width="20" height="20" viewBox="0 0 20 20" fill="none" stroke="#fff" strokeWidth="1.300">
        <path d="M1 18Q2 3 18 1" stroke="#999" /><path d="M5 18.500Q6 7 18.500 6M9.500 18.500q.500-7 9-7.500M13.500 18.500q.500-3 5-3" /><circle cx="17" cy="18" r="1" fill="#fff" />
      </svg>
      <svg className="ml-[12px] shrink-0" width="25" height="20" viewBox="0 0 25 20" fill="none" stroke="#fff" strokeWidth="1.300"><path d="M1 7h4l5-5v16l-5-5H1zM13.500 7q2 3 0 6M16.500 4.500q4 5.500 0 11M19.500 2q6 8 0 16" /></svg>
      <span className="ml-[15px] w-[40px] text-[17.500px] tracking-[-0.5px]">ENG</span>
      <div className="ml-[8px] flex w-[104px] flex-col items-center text-[18px] leading-[28px] tracking-[-0.35px] whitespace-nowrap"><span>19:14</span><span>20-11-2021</span></div>
      <svg className="ml-[22px] shrink-0" width="26" height="25" viewBox="0 0 26 25"><path d="M1 0h24v19h-8l-4 5.500V19H1z" fill="#fff" /><path d="M5.500 5h15M5.500 9.500h15M5.500 14h10" stroke="#1c1c1c" strokeWidth="1.500" /></svg>
      <i className="mr-[7px] ml-auto h-full w-px bg-[#6b6b6b]" />
    </footer>
  );
}

export default function App() {
  return (
    <div className="flex h-[1080px] w-[1920px] flex-col overflow-hidden bg-white">
      <TabStrip />
      <Toolbar />
      <main className={`relative flex h-[913px] pl-[27px] ${ui}`}>
        <div className="flex w-[1866px] bg-[#878787]">
          <nav className="flex w-[47px] flex-col items-center bg-[#7d8287] pt-[17px]">
            <svg width="32" height="30" viewBox="0 0 32 30">
              <g fill="none" stroke="#1c1879" strokeWidth="1.500"><path d="M9 4q7-5 14 0M11 6.500q5-3 10 0M9 26q7 5 14 0M11 23.500q5 3 10 0M13.500 8.500q2.500-1 5 0M13.500 21.500q2.500 1 5 0" /></g>
              <text x="16" y="19" textAnchor="middle" fontSize="15.500" fontWeight="700" textLength="30" fontFamily="Roboto, sans-serif" fill="#232323">sxm</text>
            </svg>
            <i className="mt-[21px] h-px w-8 bg-[#74787d]" />
          </nav>
          <div className="ml-[14px] w-[498px] pt-[13px]"><CallCard /><WorkflowCard /></div>
          <div className="ml-3 w-[492px] pt-[13px]"><VehicleCard /><SideCards /></div>
          <div className="pt-[13px]"><MapPanel /></div>
        </div>
        <i className="h-full w-px bg-[#d0d0d0]" />
        <ConfirmDialog />
      </main>
      <Taskbar />
    </div>
  );
}
